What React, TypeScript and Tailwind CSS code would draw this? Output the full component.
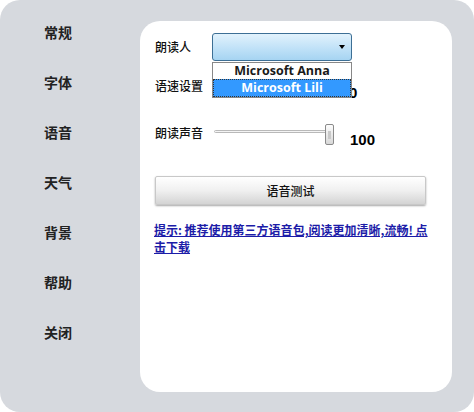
import React from 'react';

// Menu latéral des réglages
const MENU = ['常规', '字体', '语音', '天气', '背景', '帮助', '关闭'];

const CJK = "font-['Noto_Sans_CJK_SC','Noto_Sans',sans-serif]";

const VoiceSlider: React.FC = () => (
  <div className="relative ml-[2px] mt-[2px] h-[22px] w-[120px]">
    <div className="absolute left-0 right-[4px] top-[7px] h-[3px] rounded-full border border-[#b9b9b9] bg-[#f4f4f4]" />
    <div className="absolute right-0 top-[1px] h-[21px] w-[9px] rounded-[2px] border border-[#8a8a8a] bg-gradient-to-b from-[#fdfdfd] to-[#d8d8d8]">
      <div className="mx-auto mt-[6px] h-[8px] w-[3px] bg-[#c9c9c9]" />
    </div>
  </div>
);

export default function App() {
  return (
    <div className="h-[412px] w-[474px] bg-white">
      <div className={`flex h-full w-full rounded-[20px] bg-[#d6d9de] ${CJK}`}>
        {/* Menu */}
        <nav className="flex w-[140px] flex-col gap-[30px] pl-[44px] pt-[22px]">
          {MENU.map((item) => (
            <div key={item} className="text-[14px] font-semibold leading-[20px] text-[#222]">
              {item}
            </div>
          ))}
        </nav>

        {/* Panneau principal */}
        <div className="relative mb-[20px] mt-[21px] w-[312px] rounded-[20px] bg-white pl-[15px] pt-[12px]">
          {/* 朗读人 */}
          <div className="flex h-[28px] items-center">
            <span className="w-[57px] text-[12px] font-medium text-[#111]">朗读人</span>
            <div className="relative h-[28px] w-[140px] rounded-[3px] border border-[#3d6f95] bg-gradient-to-b from-[#e2f2fc] via-[#c3e3f8] to-[#a6d4f2]">
              <span className="absolute right-[6px] top-[11px] h-0 w-0 border-x-[3px] border-t-[4px] border-x-transparent border-t-black" />
            </div>
          </div>

          {/* 语速设置 */}
          <div className="mt-[11px] flex h-[28px] items-start">
            <span className="mt-[4px] w-[57px] text-[12px] font-medium leading-[20px] text-[#111]">语速设置</span>
            <span className="ml-[137px] mt-[12px] font-['Liberation_Sans',sans-serif] text-[15px] font-bold leading-[18px] text-black">0</span>
          </div>

          {/* Liste déroulante ouverte */}
          <div className="absolute left-[72px] top-[41px] w-[140px] border border-[#888] bg-white font-['Open_Sans',sans-serif] text-[12.5px] font-bold leading-[16px]">
            <div className="text-center text-[#1a1a1a]">Microsoft Anna</div>
            <div className="border border-dotted border-[#333] bg-[#3399ff] text-center text-white">Microsoft Lili</div>
          </div>

          {/* 朗读声音 */}
          <div className="mt-[21px] flex h-[26px] items-start">
            <span className="mt-[2px] w-[57px] text-[12px] font-medium leading-[20px] text-[#111]">朗读声音</span>
            <VoiceSlider />
            <span className="ml-[16px] mt-[10px] font-['Liberation_Sans',sans-serif] text-[15px] font-bold leading-[18px] text-black">100</span>
          </div>

          {/* Bouton test */}
          <button className="mt-[29px] h-[29px] w-[271px] rounded-[2px] border border-[#c8c8c8] bg-gradient-to-b from-[#ffffff] via-[#f0f0f0] to-[#d4d4d4] text-[12px] font-medium text-[#111] shadow-[0_1px_2px_rgba(0,0,0,0.35)]">
            语音测试
          </button>

          {/* Lien de téléchargement */}
          <a className="mt-[16px] -ml-px block w-[280px] text-[12px] font-semibold leading-[17px] text-[#1c1ca8] underline">
            提示: 推荐使用第三方语音包,阅读更加清晰,流畅! 点击下载
          </a>
        </div>
      </div>
    </div>
  );
}
